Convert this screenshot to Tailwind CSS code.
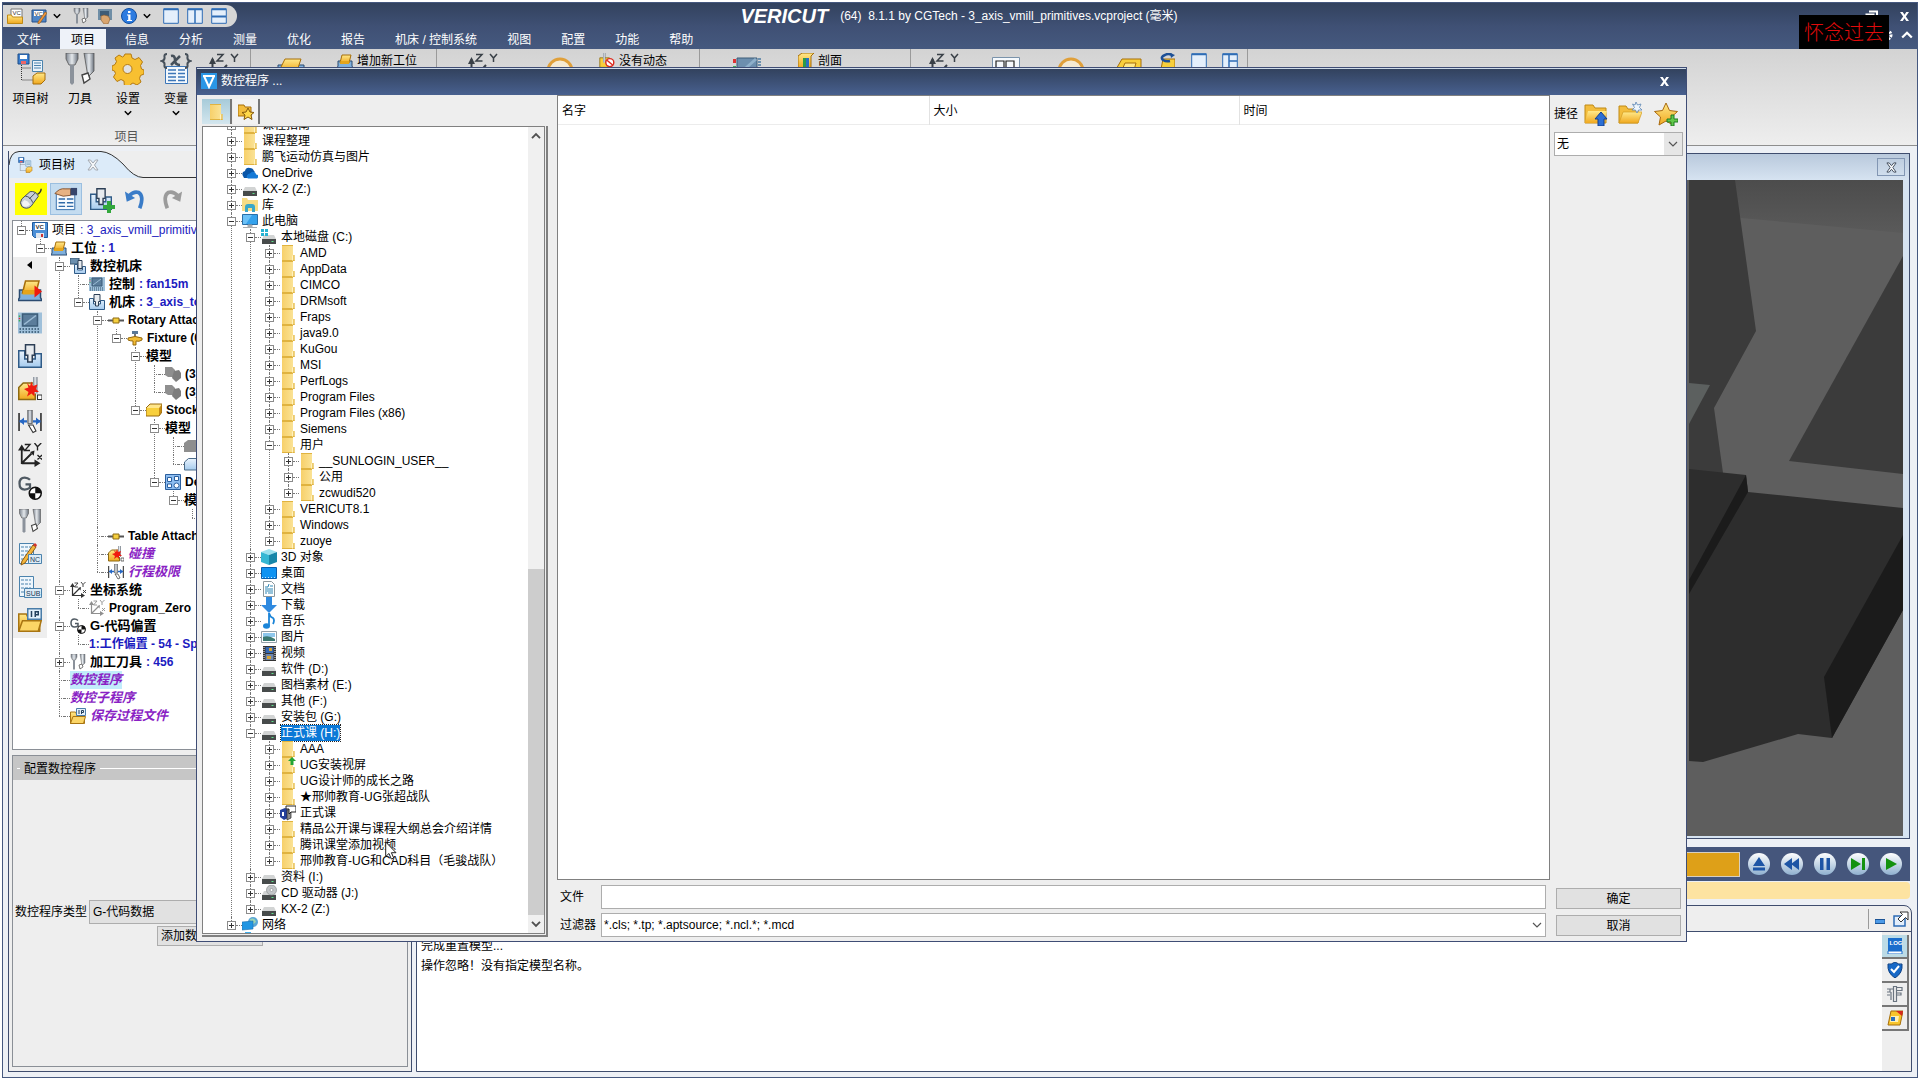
<!DOCTYPE html>
<html lang="zh-CN">
<head>
    <meta charset="UTF-8">
    <meta name="viewport" content="width=device-width, initial-scale=1.0">
    <title>VERICUT</title>
    <script src="https://cdn.jsdelivr.net/npm/@tailwindcss/browser@4"></script>
</head>
<body class="h-screen overflow-hidden bg-white p-[2px] font-['Liberation_Sans','Noto_Sans_CJK_SC',sans-serif] text-xs text-black">

    <!-- Icon library (kept rendered at zero size so its gradients stay usable) -->
    <svg class="absolute size-0" aria-hidden="true">
        <defs>
            <linearGradient id="gFolder" x1="0" y1="0" x2="1" y2="0"><stop offset="0" stop-color="#f7d06a"/><stop offset="1" stop-color="#fbe59b"/></linearGradient>
            <linearGradient id="gGold" x1="0" y1="0" x2="0" y2="1"><stop offset="0" stop-color="#ffe98a"/><stop offset="1" stop-color="#f0a81e"/></linearGradient>
            <linearGradient id="gSteel" x1="0" y1="0" x2="1" y2="0"><stop offset="0" stop-color="#7d8590"/><stop offset=".5" stop-color="#e4e8ec"/><stop offset="1" stop-color="#6b737e"/></linearGradient>
            <linearGradient id="gBlue" x1="0" y1="0" x2="0" y2="1"><stop offset="0" stop-color="#eaf4fd"/><stop offset="1" stop-color="#a5cbee"/></linearGradient>
            <linearGradient id="gBall" x1="0" y1="0" x2="0" y2="1"><stop offset="0" stop-color="#ffffff"/><stop offset="1" stop-color="#8fb0cf"/></linearGradient>
            <linearGradient id="gSky" x1="0" y1="0" x2="0" y2="1"><stop offset="0" stop-color="#4c4c4c"/><stop offset="1" stop-color="#5a5a5a"/></linearGradient>
        </defs>
        <!-- file tree icons -->
        <symbol id="folder" viewBox="0 0 16 16"><path d="M2 0h11v10h1.500v6H2z" fill="url(#gFolder)"/><path d="M2 .5h11M2 15.500h12.500M14 10v6" stroke="#e0b340" fill="none"/><path d="M12.500 10.500v5" stroke="#fff2c0"/></symbol>
        <symbol id="folderUp" viewBox="0 0 16 16"><use href="#folder"/><path d="M12 0l4 4h-2.500v4h-3V4H8z" fill="#22a436"/></symbol>
        <symbol id="drive" viewBox="0 0 16 16"><path d="M3 6h10l2 4H1z" fill="#d2d4d4"/><path d="M1 10h14v5H1z" fill="#474b4b"/><path d="M10.500 12h2v1h-2z" fill="#5fe08a"/></symbol>
        <symbol id="driveC" viewBox="0 0 16 16"><use href="#drive"/><path d="M0 0h3v3H0zM4 0h3v3H4zM0 4h3v3H0zM4 4h3v3H4z" fill="#27b3d3"/></symbol>
        <symbol id="driveCd" viewBox="0 0 16 16"><use href="#drive"/><circle cx="10.500" cy="5" r="5" fill="#c3c6c8" stroke="#8d9092" stroke-width=".7"/><circle cx="10.500" cy="5" r="1.500" fill="#fff" stroke="#8d9092" stroke-width=".7"/></symbol>
        <symbol id="cloud" viewBox="0 0 16 16"><path d="M1 11q-2-4 2-5 1-4 5-3 3 0 4 3l1 1-8 6H2z" fill="#0a56a8"/><path d="M6 13.500q-2-1-1-3t3-2q2-3 5-1 1 1 1 2 3 0 2 3l-1 1z" fill="#1479d6"/></symbol>
        <symbol id="library" viewBox="0 0 16 16"><path d="M0 1h5l1 2h10v11H0z" fill="#f7dc85"/><path d="M3 15V10q0-3 3-3h4q3 0 3 3v5h-3v-4H6v4z" fill="#3aa7c9"/></symbol>
        <symbol id="pc" viewBox="0 0 16 16"><path d="M.5 1.500h15v10H.5z" fill="#35a2ec" stroke="#2a6fa8"/><path d="M1 2h9L4 11H1z" fill="#6cc1f7"/><path d="M6 12h4v2H6zM1 14.500h14" stroke="#a9adb0" fill="#a9adb0"/></symbol>
        <symbol id="cube" viewBox="0 0 16 16"><path d="M8 0l8 3-8 3-8-3z" fill="#9be1ee"/><path d="M0 3l8 3v10l-8-3z" fill="#35b7d3"/><path d="M16 3L8 6v10l8-3z" fill="#1787a9"/></symbol>
        <symbol id="desktop" viewBox="0 0 16 16"><path d="M.5 2.500h15v11H.5z" fill="#0f93f2" stroke="#0a5fae"/><path d="M1 12.500h14" stroke="#bfe3ff" stroke-dasharray="1 2"/></symbol>
        <symbol id="doc" viewBox="0 0 16 16"><path d="M2.500.5h8l3 3v12h-11z" fill="#fff" stroke="#8c979c"/><path d="M4 6h3l1-3M9 5h3M4 8h8M4 10h8M7 12h5M4 12h2" stroke="#2c86b4" fill="none"/></symbol>
        <symbol id="down" viewBox="0 0 16 16"><path d="M5 0h6v8h5l-8 8-8-8h5z" fill="#2f8ae0"/></symbol>
        <symbol id="note" viewBox="0 0 16 16"><ellipse cx="5.500" cy="13" rx="3.500" ry="2.800" fill="#1c85d8"/><path d="M8 13V0q1 4 4 5 2 2 0 6" stroke="#1c85d8" stroke-width="1.800" fill="none"/></symbol>
        <symbol id="pic" viewBox="0 0 16 16"><path d="M.5 2.500h15v11H.5z" fill="#fff" stroke="#93a0a8"/><path d="M2 4h12v4H2z" fill="#8dc7ec"/><path d="M2 8q6-2 12 2v2H2z" fill="#3c7a72"/></symbol>
        <symbol id="film" viewBox="0 0 16 16"><path d="M2 1h13v15H2z" fill="#333"/><path d="M4.500 2h8v6h-8z" fill="#3567b0"/><path d="M4.500 9h8v6h-8z" fill="#6e86ad"/><path d="M8 3h3v3H8zM6 11h4v3H6z" fill="#d6a331"/><path d="M3 2v14M14 2v14" stroke="#fff" stroke-dasharray="1 1"/></symbol>
        <symbol id="net" viewBox="0 0 16 16"><circle cx="11" cy="5" r="5" fill="#5aa7d6"/><path d="M8 2q5-2 6 3-3 2-4 4z" fill="#9bd3b4"/><path d="M0 5l11-1v8l-11 1z" fill="#2196e3" stroke="#1b6fae" stroke-width=".6"/><path d="M3 15.500h6" stroke="#42aeea"/></symbol>
        <symbol id="course" viewBox="0 0 16 16"><path d="M0 5l5-2 3 2v8l-4 2-4-3z" fill="#24409c"/><path d="M7 5l4-1v9l-4 2z" fill="#8c8c8c" stroke="#222" stroke-width=".7"/><path d="M6 1h10v6h-5l-2 2V4H6z" fill="#fff" stroke="#222"/><path d="M2 7h2v4H2z" fill="#fff"/></symbol>
        <!-- project tree icons -->
        <symbol id="save" viewBox="0 0 16 16"><path d="M.5.5h15v15h-13l-2-2z" fill="#4c8fd6" stroke="#1f5a9c"/><path d="M3 1h10v7H3z" fill="#fff"/><path d="M4 11h8v5H4z" fill="#dfe6ee"/><path d="M9 12h2v3H9z" fill="#c33"/><text x="3.500" y="6.500" font-size="6" font-weight="bold" fill="#333">VC</text></symbol>
        <symbol id="setup" viewBox="0 0 16 16"><path d="M1 13V8h14v5l1 2H0z" fill="#7fb0dd" stroke="#2b4b70"/><path d="M3 10l2-8h9l-2 8z" fill="url(#gGold)" stroke="#a66e0a"/><path d="M3.500 8h9l-.5 3h-9z" fill="#e5a51b"/></symbol>
        <symbol id="setupRun" viewBox="0 0 16 16"><use href="#setup"/><path d="M11 5l5 4-5 4z" fill="#ef1b10"/></symbol>
        <symbol id="machine" viewBox="0 0 16 16"><path d="M.5 4.500h4V10h7V6.500h4v9H.5z" fill="url(#gBlue)" stroke="#2f5b87"/><path d="M5 .5h6v7H9.500V12h-3V7.500H5z" fill="#e7ebef" stroke="#2c3e55"/></symbol>
        <symbol id="machine2" viewBox="0 0 16 16"><path d="M0 0h9v6H0z" fill="#6b8fae" stroke="#3a556f"/><path d="M4.500 6.500h3V12h5V8.500h3v7h-11z" fill="url(#gBlue)" stroke="#2f5b87"/><path d="M8 2.500h4v8H8z" fill="#e7ebef" stroke="#2c3e55"/></symbol>
        <symbol id="control" viewBox="0 0 16 16"><path d="M0 1h16v14H0z" fill="#9fc0da"/><path d="M3 2h10v8H3z" fill="#5b7d9b" stroke="#3d5d79"/><path d="M4 9l8-6" stroke="#9dbdd6"/><path d="M1 12h14M1 14h14" stroke="#31506b" stroke-dasharray="1 1"/><path d="M1 3v1M1 6v1" stroke="#3cae57"/><path d="M1 4.500v1" stroke="#d33"/></symbol>
        <symbol id="monitor" viewBox="0 0 28 28"><path d="M4 1h20v18H4z" fill="#6d8fae" stroke="#3d5d79"/><path d="M5 18L23 2" stroke="#8fb0ca" stroke-width="3"/><path d="M0 2h3v4H0z" fill="#d33"/><path d="M0 9h3v4H0z" fill="#3cae57"/><path d="M25 2h3M25 5h3M25 8h3" stroke="#4b7ba3" stroke-width="1.500"/></symbol>
        <symbol id="attach" viewBox="0 0 16 16"><path d="M0 8.500h16" stroke="#555" stroke-width="2"/><path d="M5 6h6v5H5z" fill="#f5cf3f" stroke="#8d6a12"/></symbol>
        <symbol id="fixture" viewBox="0 0 16 16"><path d="M5 1h6v3H5z" fill="#5a7896"/><path d="M7 4h2v3H7z" fill="#777"/><path d="M1 8q7-3 14 0v2q-3 2-6 1v4H6v-4q-3 0-5-1z" fill="#f3bd36" stroke="#95690f"/></symbol>
        <symbol id="model" viewBox="0 0 16 16"><path d="M0 1h7l3 3v7H3l-3-2z" fill="#8f8f8f"/><path d="M9 5l5-1 2 3v5l-5 4-4-4z" fill="#7d7d7d"/></symbol>
        <symbol id="stock" viewBox="0 0 16 16"><path d="M0 6l4-4h12l-3 4z" fill="#ffe68a"/><path d="M0 6h13v8H0z" fill="#f8cf3c"/><path d="M13 6l3-4v8l-3 4z" fill="#c78b12"/><path d="M0 6l4-4h12v8l-3 4H0z" fill="none" stroke="#9a6b0e"/></symbol>
        <symbol id="grayBox" viewBox="0 0 16 16"><path d="M0 5l4-3h12v12H0z" fill="#8e8e8e"/></symbol>
        <symbol id="blueBox" viewBox="0 0 16 16"><path d="M.5 6l4-3.500H17V14H.5z" fill="url(#gBlue)" stroke="#4a6a88"/></symbol>
        <symbol id="design" viewBox="0 0 16 16"><path d="M.5.500h15v15H.5z" fill="#8dbdf0" stroke="#2b5f9e"/><path d="M2.500 3.500h4v4h-4zM9.500 2.500h4v4h-4zM2.500 10h4v3.500h-4z" fill="#fff" stroke="#2b5f9e"/><circle cx="11.500" cy="11.500" r="2.500" fill="#fff" stroke="#2b5f9e"/></symbol>
        <symbol id="collide" viewBox="0 0 16 16"><path d="M.5 7l3-3h8v11H.5z" fill="url(#gGold)" stroke="#8d6a12"/><path d="M10 0h3v11h-3z" fill="url(#gSteel)"/><path d="M13 12h3v3h-3z" fill="#fff" stroke="#333" stroke-width=".7"/><path d="M9 3l1 3 3-1-1 3 2 2-3 0 0 3-2-2-3 2 1-3-3-2 3-1-1-3 2 2z" fill="#ef1b10"/></symbol>
        <symbol id="travel" viewBox="0 0 16 16"><path d="M.7 2v12M15.300 2v12" stroke="#222"/><path d="M1 7.500h5M10 7.500h5" stroke="#2667c4" stroke-width="1.500"/><path d="M1 7.500l3-2.500v5zM15 7.500l-3-2.500v5z" fill="#2667c4"/><path d="M6.500 0h3v9h-3z" fill="url(#gSteel)" stroke="#555" stroke-width=".5"/><path d="M7 10l3 0 2 4-2 1z" fill="#fff" stroke="#333" stroke-width=".7"/></symbol>
        <symbol id="csys" viewBox="0 0 16 16"><path d="M2.500 14V4M2.500 13.500H12M2.500 13.500L9 7" stroke="currentColor" stroke-width="1.200" fill="none"/><path d="M2.500 1L5 5H0zM15 13.500l-4 2.500v-5zM11 5l-.5 3.500L8 6z" fill="currentColor"/><path d="M4.500 1h3.500l-3.500 4H8M11 0l2 2.500L15.500 0M13 2.500V5M13 8l3 3M16 8l-3 3" stroke="currentColor" stroke-width=".9" fill="none"/></symbol>
        <symbol id="csysGray" viewBox="0 0 16 16"><g color="#8f8f8f"><use href="#csys"/></g></symbol>
        <symbol id="gcode" viewBox="0 0 16 16"><path d="M8 2.500Q6.500 1 4.500 1 1 1 1 5t3.500 4q2 0 3.500-1.200V5.500H5" stroke="#4f5962" stroke-width="1.500" fill="none"/><circle cx="11.500" cy="11.500" r="4" fill="#fff" stroke="#111"/><path d="M11.500 11.500v-4a4 4 0 0 1 4 4zM11.500 11.500v4a4 4 0 0 1-4-4z" fill="#111"/></symbol>
        <symbol id="tools" viewBox="0 0 16 16"><path d="M1 0h6v3L5.500 6h-3L1 3z" fill="url(#gSteel)" stroke="#555" stroke-width=".4"/><path d="M3 6h2v9l-1 1-1-1z" fill="#8b929b"/><path d="M10 0h5v9l-3 3z" fill="url(#gSteel)" stroke="#555" stroke-width=".4"/><path d="M9 11l3-1 1 3-3 2z" fill="#fff" stroke="#444" stroke-width=".7"/></symbol>
        <symbol id="ip" viewBox="0 0 16 16"><path d="M.5 4h5l1 2h8v9.500H.5z" fill="url(#gGold)" stroke="#a87512"/><path d="M6.500.5h9v7h-9z" fill="#e4f1fb" stroke="#4a7da8"/><path d="M9 2v4M11.500 6V2.500h2v2h-2" stroke="#23405c" fill="none"/><path d="M3 8.500h12.500l-2 7H.5z" fill="#fbd566" stroke="#a87512"/></symbol>
        <symbol id="nc" viewBox="0 0 24 24"><path d="M1.500 1.500h14v20h-14z" fill="#eef6fc" stroke="#4b83ad"/><path d="M3 5h10M3 9h10M3 13h10M3 17h6" stroke="#4b83ad" stroke-dasharray="3 1"/><path d="M15 3l3 2-11 16-4 2 1-4z" fill="#f4b63b" stroke="#8a5a12"/><path d="M15 3l3 2 1-2-2-2z" fill="#d0322a"/><path d="M10.500 12.500h13v9h-13z" fill="#dcebf6" stroke="#4b83ad"/><text x="12" y="20" font-size="7" fill="#1d3954">NC</text></symbol>
        <symbol id="sub" viewBox="0 0 24 24"><path d="M1.500 1.500h14v20h-14z" fill="#eef6fc" stroke="#4b83ad"/><path d="M3 5h10M3 9h10M3 13h10M3 17h6" stroke="#4b83ad" stroke-dasharray="3 1"/><path d="M6.500 13.500h17v9h-17z" fill="#dcebf6" stroke="#4b83ad"/><text x="8" y="21" font-size="7" fill="#1d3954">SUB</text></symbol>
        <!-- toolbar icons -->
        <symbol id="openVc" viewBox="0 0 16 16"><path d="M4 1h11v9H4z" fill="#fff" stroke="#777"/><text x="5.500" y="7" font-size="6" fill="#333">VC</text><path d="M.5 7h4l1 2h10v6.500H.5z" fill="url(#gGold)" stroke="#c08a16"/></symbol>
        <symbol id="saveVc" viewBox="0 0 16 16"><path d="M1 2h14v12H1z" fill="#4f86c7" stroke="#27518a"/><path d="M3 3h9v5H3z" fill="#fff"/><text x="3.500" y="7.500" font-size="6" fill="#333">VC</text><path d="M14 4l2 1-7 10-2 1v-2z" fill="#f4953b" stroke="#8a5a12" stroke-width=".6"/></symbol>
        <symbol id="hand" viewBox="0 0 16 16"><path d="M1 1h14v11H1z" fill="#6f8ea6"/><path d="M3 3h9v5H3z" fill="#3d5b76"/><path d="M4 8l3-1 4 1 2 3-2 5H7l-3-4z" fill="#d9a56f" stroke="#85592c" stroke-width=".6"/></symbol>
        <symbol id="info" viewBox="0 0 16 16"><circle cx="8" cy="8" r="7.500" fill="#2c7be0" stroke="#0f4d9e"/><path d="M7 3h2.500v2H7zM6 6.500h3.500V12H11v1H6v-1h1.200V7.500H6z" fill="#fff"/></symbol>
        <symbol id="win1" viewBox="0 0 16 16"><path d="M.7.700h14.600v14.600H.7z" fill="#e4effb" stroke="#2e6cb5"/><path d="M1 1.500h14" stroke="#2e6cb5" stroke-width="1.500"/></symbol>
        <symbol id="win2" viewBox="0 0 16 16"><use href="#win1"/><path d="M8 1v14" stroke="#2e6cb5" stroke-width="1.500"/></symbol>
        <symbol id="win3" viewBox="0 0 16 16"><use href="#win1"/><path d="M1 8.500h14" stroke="#2e6cb5" stroke-width="2"/></symbol>
        <symbol id="win4" viewBox="0 0 16 16"><use href="#win1"/><path d="M7 1v14M7 8h8" stroke="#2e6cb5" stroke-width="1.500"/></symbol>
        <symbol id="chev" viewBox="0 0 8 8"><path d="M.8 2.300L4 5.500l3.200-3.200" stroke="currentColor" stroke-width="1.500" fill="none"/></symbol>
        <symbol id="chevThin" viewBox="0 0 10 10"><path d="M1 3l4 4 4-4" stroke="currentColor" stroke-width="1.200" fill="none"/></symbol>
        <symbol id="close" viewBox="0 0 10 10"><path d="M0 0h3l2 3 2-3h3L6.500 5 10 10H7L5 7l-2 3H0l3.500-5z" fill="currentColor"/></symbol>
        <symbol id="closeHollow" viewBox="0 0 12 12"><path d="M1 1h2.500L6 4l2.500-3H11L7.500 6 11 11H8.500L6 8l-2.500 3H1l3.500-5z" fill="#f4f6f8" stroke="currentColor"/></symbol>
        <symbol id="projTree" viewBox="0 0 32 32"><path d="M3 1h11v10H3z" fill="#3a7fd0" stroke="#1c4d87"/><path d="M5 2h7v4H5z" fill="#fff"/><path d="M6 8h5v3H6z" fill="#e66"/><path d="M6.500 12v15h12M6.500 15h10" stroke="#333" stroke-dasharray="1 1" fill="none"/><path d="M17.500 7.500h10v11h-10z" fill="#eaf3fb" stroke="#4b83ad"/><path d="M19 10h7M19 12.500h7M19 15h7" stroke="#4b83ad"/><path d="M18 23l4-3h8v7l-4 4h-8z" fill="url(#gGold)" stroke="#a66e0a"/></symbol>
        <symbol id="gear" viewBox="0 0 32 32"><path d="M13 1h6l1 4 3 1.500 4-2 3.500 4.500-2 3.500 1 3.500 2.500 1v4l-3.500 1.500-1 3 1.500 3.500-4 3-4-2-2 1-1.500 3.500h-5L12 28l-3-1.500-4 2L1.500 24l2-3.500L2.500 18 0 17v-4l3-1.500 1.500-3L3 5l4-3 3.500 2L12 3z" fill="#f8c031" stroke="#b57a10"/><circle cx="15.500" cy="16" r="4.500" fill="#e2e2e2" stroke="#b57a10"/></symbol>
        <symbol id="varX" viewBox="0 0 32 32"><path d="M5.500 13.500h22v17h-22z" fill="#f3f8fd" stroke="#3c76b8"/><path d="M8 17h8M18 17h7M8 20.500h8M18 20.500h7M8 24h8M18 24h7M8 27.500h8M18 27.500h7" stroke="#3c76b8" stroke-width="1.500"/><path d="M7 1Q4 1 4.500 4T2 8q3 1 2.500 4T7 15M25 1q3 0 2.500 3T30 8q-3 1-2.500 4T25 15" fill="none" stroke="#46505a" stroke-width="2"/><path d="M11 3q4-1 4 4t5 5M20 3l-9 9" fill="none" stroke="#46505a" stroke-width="2.500"/></symbol>
        <symbol id="axisZY" viewBox="0 0 32 32"><path d="M4.500 31V6" stroke="#3a4148" stroke-width="2"/><path d="M4.500 4l3.500 7H1z" fill="#3a4148"/><path d="M9 1.500h6L9 8h6.500M23 1l3.500 4L30 1M26.500 5v4" stroke="#3a4148" stroke-width="1.500" fill="none"/><path d="M6 26L19 12" stroke="#3a4148" stroke-width="2"/></symbol>
        <symbol id="bigBox" viewBox="0 0 28 28"><path d="M1 26V8h26v18z" fill="#7fb0dd" stroke="#2b4b70"/><path d="M2 14l6-12h16l-4 12z" fill="url(#gGold)" stroke="#a66e0a"/></symbol>
        <symbol id="hollowBox" viewBox="0 0 28 28"><path d="M1 14L8 2h19v12l-5 6H1z" fill="#f8cf3c" stroke="#a66e0a"/><path d="M8 13l3-7h11l-2 7z" fill="#ffe98a" stroke="#a66e0a"/></symbol>
        <symbol id="ring" viewBox="0 0 28 28"><circle cx="14" cy="14" r="12" fill="#f5ead2" stroke="#e0a03a" stroke-width="3"/></symbol>
        <symbol id="nodyn" viewBox="0 0 20 20"><path d="M1 6h12v12H1z" fill="#f8cf3c" stroke="#8d6a12"/><path d="M5 0h3v12H5z" fill="url(#gSteel)"/><circle cx="13.500" cy="12" r="5" fill="#fff" stroke="#dc2a1e" stroke-width="1.800"/><path d="M10 9l7 6" stroke="#dc2a1e" stroke-width="1.800"/></symbol>
        <symbol id="sectionIc" viewBox="0 0 16 16"><path d="M0 3l4-3h12l-3 3v12H0z" fill="url(#gGold)" stroke="#a66e0a"/><path d="M5 5h3v10H5z" fill="#2c9c48"/><path d="M8 5h3v10H8z" fill="#2a6fc0"/></symbol>
        <symbol id="frames" viewBox="0 0 28 24"><path d="M.5.500h27v23H.5z" fill="#f5f9fd" stroke="#7a93ab"/><path d="M4 4h8v16H4zM14 4h8v16h-8z" fill="none" stroke="#222" stroke-width="1.200"/></symbol>
        <symbol id="sIcon" viewBox="0 0 16 16"><path d="M4 6h12v10H2z" fill="#f8cf3c" stroke="#a66e0a"/><path d="M13 2Q9 0 6 2 1 4 4 7q3 2 7 1" stroke="#1c4f96" stroke-width="2.500" fill="none"/><path d="M11 0l5 2-4 3z" fill="#1c4f96"/></symbol>
        <symbol id="mouse" viewBox="0 0 26 26"><path d="M20 8q4-2 4-6" stroke="#333" stroke-width="1.500" fill="none"/><path d="M3 13L12 5q6-1 9 5l-8 11q-5 4-10 0-3-4 0-8z" fill="#c9d0d6" stroke="#3d464f"/><path d="M7 10q5 0 8 7M11 13l7-7" stroke="#3d464f" fill="none"/><path d="M6 14q4 1 6 5-4 4-8 1-2-3 2-6z" fill="#f2f4f6"/></symbol>
        <symbol id="handList" viewBox="0 0 26 26"><path d="M2.500 6.500h20v18h-20z" fill="#f6fafe" stroke="#2f6aa8"/><path d="M5 13h7M14 13h7M5 17h7M14 17h7M5 21h7M14 21h7" stroke="#2f6aa8" stroke-width="1.500"/><path d="M1 7q5-6 11-5h6v7l-8 1z" fill="#e7b283" stroke="#83502a"/><path d="M18 1h7v8h-7z" fill="#36456b"/></symbol>
        <symbol id="undo" viewBox="0 0 26 26"><path d="M6 9q5-5 10-3 6 4 1 17" stroke="currentColor" stroke-width="4" fill="none"/><path d="M1 5l2 11 9-4z" fill="currentColor"/></symbol>
        <symbol id="upFolder" viewBox="0 0 24 24"><path d="M1 3h8l2 3h11v15H1z" fill="#f3bd3d" stroke="#c08a16"/><path d="M4 9h19l-3 12H1z" fill="url(#gGold)"/><path d="M17 10l6 7h-3v7h-6v-7h-3z" fill="#2d6fd4" stroke="#123f8c"/></symbol>
        <symbol id="newFolder" viewBox="0 0 24 24"><path d="M1 4h7l2 3h10v14H1z" fill="#f3bd3d" stroke="#c08a16"/><path d="M5 10h19l-4 11H1z" fill="url(#gGold)" stroke="#d39b20" stroke-width=".7"/><path d="M18 0l1.500 3L23 2l-1.500 3.500L24 8l-3.500 0L19 11l-1.500-3L14 8l2.500-2.500L14.500 2 17 3z" fill="#eef5fc" stroke="#5d87b5" stroke-width=".8"/></symbol>
        <symbol id="starAdd" viewBox="0 0 24 24"><path d="M12 1l3.500 7.500 8 1-6 5.500 1.500 8L12 19l-7 4 1.500-8-6-5.500 8-1z" fill="url(#gGold)" stroke="#a8690f"/><path d="M17 13h3v4h4v3h-4v4h-3v-4h-4v-3h4z" fill="#62c84a" stroke="#1d7a20"/></symbol>
        <symbol id="favFolder" viewBox="0 0 16 16"><path d="M0 1h6l1 2h6v9H0z" fill="#f3bd3d" stroke="#a66e0a"/><path d="M10 4l2 4 4 .5-3 2.500 1 4.500-4-2.500L6 15.500 7 11 4 8.500 8 8z" fill="#ffd84a" stroke="#85590c"/></symbol>
        <symbol id="shield" viewBox="0 0 16 16"><path d="M8 0q4 3 7 2 1 9-7 14Q0 11 1 2q3 1 7-2z" fill="#1668c7" stroke="#0b3f82"/><path d="M4 7l3 3 5-6" stroke="#fff" stroke-width="2" fill="none"/></symbol>
        <symbol id="logBook" viewBox="0 0 16 16"><path d="M1 0h14v13H1z" fill="#1a6dcc"/><path d="M1 13h14v3H1z" fill="#fff" stroke="#1a6dcc"/><text x="2.500" y="7" font-size="6" font-weight="bold" fill="#fff">LOG</text></symbol>
        <symbol id="caliper" viewBox="0 0 16 16"><path d="M6.500.5h3v15h-3zM0 3h6M3 3v3H0M3 9H0M4 6v8M10 1.500h5v3h-5M10 7h4v2h-4" fill="none" stroke="#6a7480" stroke-width="1.200"/></symbol>
        <symbol id="boxRed" viewBox="0 0 16 16"><path d="M4 1h12l-3 14H1z" fill="#f8c52c" stroke="#a66e0a"/><path d="M4 6h8l-1 6H3z" fill="#fff1b5"/><path d="M9 1h7l-1 5z" fill="#d3281f"/><path d="M4 7h4v4H4z" fill="#2a6fc0"/></symbol>
    </svg>

    <div class="flex h-full flex-col border border-[#45587f] bg-[#eeeeee]">

        <!-- Title bar and menu -->
        <header class="shrink-0 bg-linear-to-b from-[#32425e] via-[#3f5074] to-[#45597f] text-white">
            <div class="flex h-[26px] items-center">
                <div class="flex h-[22px] w-[234px] shrink-0 items-center rounded-r-full bg-[#d6d6d6] pl-1 text-black">
                    <svg class="size-4"><use href="#openVc"/></svg>
                    <svg class="ml-2 size-4"><use href="#saveVc"/></svg>
                    <svg class="ml-1.5 size-2"><use href="#chev"/></svg>
                    <svg class="ml-3 size-4"><use href="#tools"/></svg>
                    <svg class="ml-2 size-4"><use href="#hand"/></svg>
                    <svg class="ml-2 size-4"><use href="#info"/></svg>
                    <svg class="ml-1.5 size-2"><use href="#chev"/></svg>
                    <svg class="ml-3 size-4"><use href="#win1"/></svg>
                    <svg class="ml-2 size-4"><use href="#win2"/></svg>
                    <svg class="ml-2 size-4"><use href="#win3"/></svg>
                </div>
                <h1 class="flex flex-1 items-center justify-center gap-3 whitespace-pre pr-[184px]">
                    <span class="text-xl leading-6 font-bold italic">VERICUT</span>
                    <span>(64)  8.1.1 by CGTech - 3_axis_vmill_primitives.vcproject (毫米)</span>
                </h1>
                <button class="mr-[18px]" aria-label="还原"><svg class="size-[13px]" viewBox="0 0 13 13"><path d="M4 1.500h8v7M1.500 4.500h7v7h-7z" stroke="#fff" stroke-width="2" fill="none"/></svg></button>
                <button class="mr-1 p-1" aria-label="关闭"><svg class="size-[9px]"><use href="#close"/></svg></button>
            </div>
            <nav class="flex h-5 items-end gap-2 whitespace-nowrap pl-[3px] leading-[18px]">
                <a href="#" class="px-[11px]">文件</a>
                <a href="#" class="bg-[#eef2f9] px-[11px] pt-0.5 text-black">项目</a>
                <a href="#" class="px-[11px]">信息</a>
                <a href="#" class="px-[11px]">分析</a>
                <a href="#" class="px-[11px]">测量</a>
                <a href="#" class="px-[11px]">优化</a>
                <a href="#" class="px-[11px]">报告</a>
                <a href="#" class="px-[11px]">机床 / 控制系统</a>
                <a href="#" class="px-[11px]">视图</a>
                <a href="#" class="px-[11px]">配置</a>
                <a href="#" class="px-[11px]">功能</a>
                <a href="#" class="px-[11px]">帮助</a>
                <svg class="mb-2 ml-auto size-3" viewBox="0 0 12 12"><circle cx="6" cy="6" r="4" stroke="#fff" stroke-width="3" stroke-dasharray="2 1" fill="none"/></svg>
                <svg class="mb-2 mr-1 size-3 rotate-180"><use href="#chev"/></svg>
            </nav>
        </header>

        <!-- Ribbon -->
        <section class="flex h-[97px] shrink-0 border-b border-[#8e8e8e] bg-linear-to-b from-[#d3d3d3] to-[#eeeeee]">
            <div class="flex flex-col border-r border-[#9a9a9a]">
                <div class="flex h-[81px] pt-1">
                    <button class="flex w-[55px] flex-col items-center gap-1.5"><svg class="size-8"><use href="#projTree"/></svg>项目树</button>
                    <button class="flex w-11 flex-col items-center gap-1.5"><svg class="size-8"><use href="#tools"/></svg>刀具</button>
                    <button class="flex w-[52px] flex-col items-center gap-1.5"><svg class="size-8"><use href="#gear"/></svg>设置<svg class="-mt-1 size-2"><use href="#chev"/></svg></button>
                    <button class="flex w-11 flex-col items-center gap-1.5"><svg class="size-8"><use href="#varX"/></svg>变量<svg class="-mt-1 size-2"><use href="#chev"/></svg></button>
                    <button class="flex w-[52px] flex-col items-center"><svg class="size-8"><use href="#axisZY"/></svg></button>
                </div>
                <p class="text-center leading-[14px] text-[#555]">项目</p>
            </div>
            <div class="flex items-start border-r border-[#9a9a9a] pt-1">
                <button class="flex w-20 justify-center pt-1"><svg class="size-7"><use href="#bigBox"/></svg></button>
                <button class="flex w-[105px] items-center gap-1 pl-1.5"><svg class="size-4"><use href="#setup"/></svg>增加新工位</button>
            </div>
            <div class="flex items-start border-r border-[#9a9a9a] pt-1">
                <button class="flex w-[92px] justify-center"><svg class="size-8"><use href="#axisZY"/></svg></button>
                <button class="flex w-[62px] justify-center pt-1"><svg class="size-7"><use href="#ring"/></svg></button>
                <button class="flex w-[108px] items-center gap-1 pl-2"><svg class="size-4"><use href="#nodyn"/></svg>没有动态</button>
            </div>
            <div class="flex items-start border-r border-[#9a9a9a] pt-1">
                <button class="flex w-[94px] justify-center pt-1"><svg class="size-7"><use href="#monitor"/></svg></button>
                <button class="flex w-[116px] items-center gap-1 pl-1"><svg class="size-4"><use href="#sectionIc"/></svg>剖面</button>
            </div>
            <div class="flex items-start border-r border-[#9a9a9a] pt-1">
                <button class="flex w-[66px] justify-center"><svg class="size-8"><use href="#axisZY"/></svg></button>
                <button class="flex w-[58px] justify-center pt-1"><svg class="h-6 w-7"><use href="#frames"/></svg></button>
                <button class="flex w-[72px] justify-center pt-1"><svg class="size-7"><use href="#ring"/></svg></button>
                <button class="flex w-[42px] justify-center pt-1"><svg class="size-7"><use href="#hollowBox"/></svg></button>
                <button class="flex w-9 justify-center"><svg class="size-4"><use href="#sIcon"/></svg></button>
                <button class="flex w-7 justify-center"><svg class="size-4"><use href="#win1"/></svg></button>
                <button class="flex w-[34px] justify-center"><svg class="size-4"><use href="#win4"/></svg></button>
            </div>
        </section>

        <main class="flex min-h-0 flex-1 gap-1 bg-[#edf0f5] p-[5px]">

            <!-- Project tree panel -->
            <aside class="relative flex w-[404px] shrink-0 flex-col border-x border-b border-[#3f4d6e] bg-[#eeeeee]">
                <div class="flex h-[27px]">
                    <div class="relative flex w-[134px] items-center gap-1.5 pl-2">
                        <svg class="absolute inset-0 h-full w-full" viewBox="0 0 134 27"><path d="M0 27V11Q1 1 10 .5H92Q102 1 114 13 125 26 134 26.500V27z" fill="#dcebf9"/><path d="M0 14Q1 1 10 .5H92Q102 1 114 13 125 26.500 134 26.500" fill="none" stroke="#333"/></svg>
                        <svg class="relative size-4"><use href="#projTree"/></svg>
                        <span class="relative">项目树</span>
                        <svg class="relative ml-1.5 size-3 text-[#a3a9b1]"><use href="#closeHollow"/></svg>
                    </div>
                    <div class="flex-1 border-b border-[#333]"></div>
                </div>
                <div class="flex h-[42px] items-center gap-[3px] pl-1.5">
                    <button class="grid size-8 place-items-center bg-[#ffff00]" aria-label="选择"><svg class="size-6"><use href="#mouse"/></svg></button>
                    <button class="grid size-8 place-items-center border border-[#9bbfe0] bg-[#c4dcf0]" aria-label="配置"><svg class="size-6"><use href="#handList"/></svg></button>
                    <button class="relative grid size-8 place-items-center" aria-label="添加"><svg class="size-[22px]"><use href="#machine"/></svg><svg class="absolute right-0.5 bottom-0.5 size-3" viewBox="0 0 12 12"><path d="M4 0h4v4h4v4H8v4H4V8H0V4h4z" fill="#32a83c"/></svg></button>
                    <button class="grid size-8 place-items-center text-[#3a7cc8]" aria-label="撤销"><svg class="size-6"><use href="#undo"/></svg></button>
                    <button class="grid size-8 place-items-center text-[#9b9b9b]" aria-label="重做"><svg class="size-6 -scale-x-100"><use href="#undo"/></svg></button>
                    <button class="grid size-8 place-items-center" aria-label="展开"><svg class="size-5"><use href="#win1"/></svg></button>
                </div>
                <div class="relative mb-[5px] ml-[3px] mr-[3px] min-h-0 flex-1 overflow-hidden border border-[#8a8f96] bg-white">
                    <ul id="projectTree" class="whitespace-nowrap pl-1"></ul>
                    <!-- Tool palette docked over the tree -->
                    <div class="absolute left-0 top-9 flex w-[34px] flex-col items-center gap-[9px] bg-[#eeeeee] pb-1.5 pt-1">
                        <svg class="size-2" viewBox="0 0 8 8"><path d="M6 0v8L1 4z"/></svg>
                        <svg class="size-6"><use href="#setupRun"/></svg>
                        <svg class="size-6"><use href="#control"/></svg>
                        <svg class="size-6"><use href="#machine"/></svg>
                        <svg class="size-6"><use href="#collide"/></svg>
                        <svg class="size-6"><use href="#travel"/></svg>
                        <svg class="size-6 text-[#222]"><use href="#csys"/></svg>
                        <svg class="size-6"><use href="#gcode"/></svg>
                        <svg class="size-6"><use href="#tools"/></svg>
                        <svg class="size-6"><use href="#nc"/></svg>
                        <svg class="size-6"><use href="#sub"/></svg>
                        <svg class="size-6"><use href="#ip"/></svg>
                    </div>
                </div>
                <section class="mx-[3px] mb-1 h-[312px] shrink-0 border border-[#8a8f96]">
                    <div class="flex h-6 items-center gap-1 bg-[#c6c6c6] pl-1">
                        <span class="h-px w-[3px] bg-white"></span>
                        <h2 class="pt-0.5">配置数控程序</h2>
                        <span class="h-px flex-1 bg-white"></span>
                    </div>
                    <div class="flex items-center gap-0.5 pl-0.5 pt-[120px]">
                        <label for="ncType">数控程序类型</label>
                        <select id="ncType" class="h-6 w-[310px] appearance-none border border-[#adadad] bg-[#e1e1e1] pl-[3px]"><option>G-代码数据</option></select>
                    </div>
                    <button class="ml-36 mt-0.5 h-5 w-[106px] border border-[#adadad] bg-[#e1e1e1] pl-[3px] text-left leading-4">添加数控程序</button>
                </section>
            </aside>

            <!-- Machine view, playback and log -->
            <div class="flex min-w-0 flex-1 flex-col pt-[2px]">
                <section class="mr-0.5 flex min-h-0 flex-1 flex-col border border-[#3f4d6e] bg-[#d6e3f1]">
                    <div class="flex h-[26px] items-center justify-end bg-linear-to-b from-[#b9c9dc] to-[#d6e3f1] pr-1">
                        <button class="grid h-[18px] w-7 place-items-center border border-[#8296b3] text-[#3c4756]" aria-label="关闭视图"><svg class="size-[11px]"><use href="#closeHollow"/></svg></button>
                    </div>
                    <div class="mb-0.5 mr-1.5 flex min-h-0 flex-1 justify-end bg-[#5e5e5e]">
                        <svg class="h-full w-[214px]" viewBox="0 0 214 656" preserveAspectRatio="none">
                            <path d="M0 0H214V53L52 38z" fill="url(#gSky)"/>
                            <path d="M0 0H46L67 151 25 228 34 293H0z" fill="#3b3b3b"/>
                            <path d="M0 203L21 205 0 244z" fill="#5c605f"/>
                            <path d="M214 76L100 281 214 294z" fill="#3b3b3b"/>
                            <path d="M0 289L57 295 59 312 214 328V430L143 558 109 554 14 582 0 581z" fill="#2d2d2d"/>
                            <path d="M214 355L135 497 143 558 214 430z" fill="#1b1b1b"/>
                            <path d="M57 295L59 312 0 414V400z" fill="#1b1b1b"/>
                        </svg>
                    </div>
                </section>
                <div class="mr-0.5 mt-2 flex h-[34px] shrink-0 items-center gap-[11px] bg-[#45567c] pr-2">
                    <div class="mr-[-3px] h-[25px] flex-1 border border-[#d8d0c0] bg-[#dea018]"></div>
                    <button class="size-[22px]" aria-label="重置"><svg class="size-full" viewBox="0 0 22 22"><circle cx="11" cy="11" r="11" fill="url(#gBall)"/><path d="M11 4l6 9H5zM5 14.500h12v3H5z" fill="#1d55a5"/></svg></button>
                    <button class="size-[22px]" aria-label="后退"><svg class="size-full" viewBox="0 0 22 22"><circle cx="11" cy="11" r="11" fill="url(#gBall)"/><path d="M11 5v12l-8-6zM18 5v12l-8-6z" fill="#1d55a5"/></svg></button>
                    <button class="size-[22px]" aria-label="暂停"><svg class="size-full" viewBox="0 0 22 22"><circle cx="11" cy="11" r="11" fill="url(#gBall)"/><path d="M6 5h3.500v12H6zM12.500 5H16v12h-3.500z" fill="#1d55a5"/></svg></button>
                    <button class="size-[22px]" aria-label="单步"><svg class="size-full" viewBox="0 0 22 22"><circle cx="11" cy="11" r="11" fill="url(#gBall)"/><path d="M4 5l10 6-10 6zM15 5h3v12h-3z" fill="#14920f"/></svg></button>
                    <button class="size-[22px]" aria-label="播放"><svg class="size-full" viewBox="0 0 22 22"><circle cx="11" cy="11" r="11" fill="url(#gBall)"/><path d="M6 5l11 6-11 6z" fill="#14920f"/></svg></button>
                </div>
                <div class="mr-0.5 mt-px h-[17px] shrink-0 rounded-r bg-[#fde3a1]"></div>
                <section class="mt-1.5 flex h-[167px] shrink-0 flex-col rounded-tr-lg border border-[#3f4d6e] bg-[#eeeeee]">
                    <div class="flex h-[26px] shrink-0 items-center justify-end border-b border-[#3f4d6e] pr-0.5">
                        <span class="mr-1.5 h-5 w-px bg-[#9a9a9a]"></span>
                        <svg class="mr-2 size-2.5" viewBox="0 0 10 10"><path d="M0 5.500h10v4H0z" fill="#4d9be8" stroke="#1d5596"/></svg>
                        <svg class="size-4" viewBox="0 0 16 16"><path d="M1 5h11v10H1z" fill="#e4effb" stroke="#2e6cb5" stroke-width="1.500"/><path d="M7 1h8v8l-2.500-2.500L8 11 5 8l4.500-4.500z" fill="#fff" stroke="#333"/></svg>
                    </div>
                    <div class="flex min-h-0 flex-1">
                        <div class="flex-1 bg-white pl-1 pt-1 leading-5">
                            <p>完成重置模型...</p>
                            <p>操作忽略！没有指定模型名称。</p>
                        </div>
                        <div class="w-[29px] pt-[3px]">
                            <button class="grid h-6 w-[27px] place-items-center border-b-2 border-r-2 border-[#777] bg-[#bcdbe6]" aria-label="日志"><svg class="size-4"><use href="#logBook"/></svg></button>
                            <button class="grid h-6 w-[27px] place-items-center border-b-2 border-r-2 border-[#777]" aria-label="检查"><svg class="size-4"><use href="#shield"/></svg></button>
                            <button class="grid h-6 w-[27px] place-items-center border-b-2 border-r-2 border-[#777]" aria-label="测量"><svg class="size-4"><use href="#caliper"/></svg></button>
                            <button class="grid h-6 w-[27px] place-items-center border-b-2 border-r-2 border-[#777]" aria-label="比较"><svg class="size-4"><use href="#boxRed"/></svg></button>
                        </div>
                    </div>
                </section>
            </div>
        </main>
    </div>

    <!-- Screen owner mark -->
    <div class="absolute right-[31px] top-[15px] flex h-[34px] w-[90px] items-center justify-center bg-black font-['Noto_Sans_CJK_SC',sans-serif] text-xl font-light text-[#e00b0b]">怀念过去</div>

    <!-- NC program dialog -->
    <div role="dialog" aria-labelledby="dlgTitle" class="absolute bottom-[138px] left-[196px] right-[233px] top-[67px] flex flex-col border border-[#3f4d75] bg-[#eeeeee]">
        <div class="flex h-[27px] shrink-0 items-center gap-1 border-t border-[#cfdbe8] bg-linear-to-b from-[#32425e] to-[#48608f] pb-0.5 pl-1 pr-[17px] text-white">
            <svg class="size-4" viewBox="0 0 16 16"><path d="M0 0h16v16H0z" fill="#2a96e6"/><path d="M2 3h12M3 3l5 11 5-11" stroke="#fff" stroke-width="2" fill="none"/></svg>
            <h2 id="dlgTitle" class="flex-1">数控程序 ...</h2>
            <button aria-label="关闭"><svg class="size-[9px]"><use href="#close"/></svg></button>
        </div>
        <div class="flex min-h-0 flex-1">
            <!-- Folder tree -->
            <div class="flex w-[360px] shrink-0 flex-col pb-1 pl-[5px] pr-[9px] pt-1">
                <div class="flex h-[27px] gap-px">
                    <button class="grid h-[25px] w-[30px] place-items-center border-r-2 border-[#777] bg-linear-to-b from-[#a7cbd9] to-[#d3e6ee]" aria-label="文件夹"><svg class="size-4"><use href="#folder"/></svg></button>
                    <button class="grid h-[25px] w-[27px] place-items-center border-r-2 border-[#777] bg-[#f2f2f2]" aria-label="收藏夹"><svg class="size-4"><use href="#favFolder"/></svg></button>
                </div>
                <div class="min-h-0 flex-1 border-b-2 border-r-2 border-[#808080] pb-px pr-px">
                    <div class="flex h-full border border-[#808080] bg-white">
                        <div class="flex min-w-0 flex-1 flex-col justify-end overflow-hidden pl-6">
                            <ul id="folderTree" class="whitespace-nowrap"></ul>
                        </div>
                        <div class="flex w-4 flex-col items-center bg-[#f0f0f0] text-[#505050]">
                            <svg class="my-1 size-2.5 shrink-0 rotate-180"><use href="#chev"/></svg>
                            <div class="flex-[425]"></div>
                            <div class="w-full flex-[346] bg-[#cdcdcd]"></div>
                            <svg class="my-1 size-2.5 shrink-0"><use href="#chev"/></svg>
                        </div>
                    </div>
                </div>
            </div>
            <!-- File list -->
            <div class="flex min-w-0 flex-1 flex-col pb-1">
                <div class="min-h-0 flex-1 border border-[#808080] bg-white">
                    <table class="w-full table-fixed text-left">
                        <thead>
                            <tr class="h-7 border-b border-[#ececec]">
                                <th class="w-[371px] border-r border-[#e2e2e2] pl-1 pt-0.5 font-normal">名字</th>
                                <th class="w-[310px] border-r border-[#e2e2e2] pl-1 pt-0.5 font-normal">大小</th>
                                <th class="pl-1 pt-0.5 font-normal">时间</th>
                            </tr>
                        </thead>
                    </table>
                </div>
                <div class="mt-[5px] flex h-6 items-center pr-1">
                    <label for="fileName" class="w-11 pl-[3px]">文件</label>
                    <input id="fileName" type="text" class="h-full flex-1 border border-[#adadad] bg-white px-0.5">
                </div>
                <div class="relative mt-1 flex h-6 items-center pr-1">
                    <label for="filter" class="w-11 pl-[3px]">过滤器</label>
                    <select id="filter" class="h-full flex-1 appearance-none border border-[#adadad] bg-white px-0.5"><option>*.cls; *.tp; *.aptsource; *.ncl.*; *.mcd</option></select>
                    <svg class="pointer-events-none absolute right-2 size-2.5 text-[#555]"><use href="#chevThin"/></svg>
                </div>
            </div>
            <!-- Shortcuts and actions -->
            <div class="flex w-[136px] shrink-0 flex-col pb-[5px] pl-1 pr-[3px]">
                <div class="flex h-[37px] items-center">
                    <label for="shortcut">捷径</label>
                    <button class="ml-1.5" aria-label="上一级"><svg class="size-6"><use href="#upFolder"/></svg></button>
                    <button class="ml-2.5" aria-label="新建文件夹"><svg class="size-6"><use href="#newFolder"/></svg></button>
                    <button class="ml-3" aria-label="添加收藏"><svg class="size-6"><use href="#starAdd"/></svg></button>
                </div>
                <div class="relative flex items-center">
                    <select id="shortcut" class="h-6 w-full appearance-none border border-[#adadad] bg-white px-0.5"><option>无</option></select>
                    <span class="pointer-events-none absolute inset-y-px right-px grid w-[18px] place-items-center bg-[#e6e6e6]"><svg class="size-2.5 text-[#555]"><use href="#chevThin"/></svg></span>
                </div>
                <div class="mt-auto flex flex-col gap-1.5 pl-0.5 pr-0.5">
                    <button class="h-[21px] border border-[#adadad] bg-[#e1e1e1]">确定</button>
                    <button class="h-[21px] border border-[#adadad] bg-[#e1e1e1]">取消</button>
                </div>
            </div>
        </div>
    </div>

    <!-- Pointer -->
    <svg class="pointer-events-none absolute left-[385px] top-[841px] h-[19px] w-3" viewBox="0 0 12 19"><path d="M.7 1v14.500l3.300-3 2.300 5.500 2.400-1L6.400 11.700H11z" fill="#fff" stroke="#222"/></svg>

    <script>
        const f = (label, kids) => ({ icon: 'folder', label, kids, box: kids ? '-' : '+' });
        const n = (icon, label, kids) => ({ icon, label, kids, box: kids ? '-' : '+' });

        const folders = [
            f('课程指南'), f('课程整理'), f('鹏飞运动仿真与图片'),
            n('cloud', 'OneDrive'), n('drive', 'KX-2 (Z:)'), n('library', '库'),
            n('pc', '此电脑', [
                n('driveC', '本地磁盘 (C:)', [
                    f('AMD'), f('AppData'), f('CIMCO'), f('DRMsoft'), f('Fraps'), f('java9.0'),
                    f('KuGou'), f('MSI'), f('PerfLogs'), f('Program Files'), f('Program Files (x86)'), f('Siemens'),
                    f('用户', [f('__SUNLOGIN_USER__'), f('公用'), f('zcwudi520')]),
                    f('VERICUT8.1'), f('Windows'), f('zuoye'),
                ]),
                n('cube', '3D 对象'), n('desktop', '桌面'), n('doc', '文档'), n('down', '下载'),
                n('note', '音乐'), n('pic', '图片'), n('film', '视频'),
                n('drive', '软件 (D:)'), n('drive', '图档素材 (E:)'), n('drive', '其他 (F:)'), n('drive', '安装包 (G:)'),
                Object.assign(n('drive', '正式课 (H:)', [
                    f('AAA'), n('folderUp', 'UG安装视屏'), f('UG设计师的成长之路'), f('★邢帅教育-UG张超战队'),
                    n('course', '正式课'), f('精品公开课与课程大纲总会介绍详情'), f('腾讯课堂添加视频'),
                    f('邢帅教育-UG和CAD科目（毛骏战队）'),
                ]), { cls: 'bg-[#0a78d7] text-white outline outline-dotted outline-[#222]' }),
                n('drive', '资料 (I:)'), n('driveCd', 'CD 驱动器 (J:)'), n('drive', 'KX-2 (Z:)'),
            ]),
            n('net', '网络'),
        ];

        const bold = 'text-[13px] font-bold';
        const purple = 'text-[13px] font-bold italic text-[#8a1fc4]';
        // p: project node (icon, label, value, children)
        const p = (icon, label, value, kids, cls = bold) => ({ icon, label, value, kids, cls, box: kids ? '-' : '' });

        const project = [
            Object.assign(p('save', '项目', ': 3_axis_vmill_primitives', [
                p('setup', '工位', ': 1', [
                    p('machine2', '数控机床', '', [
                        p('control', '控制', ': fan15m'),
                        p('machine', '机床', ': 3_axis_tool_chain', [
                            p('attach', 'Rotary Attach', '', [
                                p('fixture', 'Fixture (0, 0, 0)', '', [
                                    p('', '模型', '', [
                                        p('model', '(3_axis_1)', '', null, 'font-bold'),
                                        p('model', '(3_axis_2)', '', null, 'font-bold'),
                                    ]),
                                    p('stock', 'Stock (0, 0, 0)', '', [
                                        p('', '模型', '', [p('grayBox', '', ''), p('blueBox', '', '')]),
                                        p('design', 'Design', '', [
                                            p('', '模型', '', [p('', '&nbsp;', '')]),
                                        ], 'font-bold'),
                                    ], 'font-bold'),
                                ], 'font-bold'),
                            ], 'font-bold'),
                            p('attach', 'Table Attach', '', null, 'font-bold'),
                            p('collide', '碰撞', '', null, purple),
                            p('travel', '行程极限', '', null, purple),
                        ]),
                    ]),
                    p('csys', '坐标系统', '', [p('csysGray', 'Program_Zero', '', null, 'font-bold')]),
                    p('gcode', 'G-代码偏置', '', [
                        p('', '1:工作偏置 - 54 - Spindle', '', null, 'font-bold text-[#1b1bc0]'),
                    ]),
                    Object.assign(p('tools', '加工刀具', ': 456'), { box: '+' }),
                    p('', '数控程序', '', null, 'bg-[#c2ecfb] text-[13px] font-bold italic text-[#8a1fc4]'),
                    p('', '数控子程序', '', null, purple),
                    p('ip', '保存过程文件', '', null, purple),
                ]),
            ], ''), { valueCls: 'text-[#1b1bc0]' }),
        ];

        function boxHtml(sign) {
            if (!sign) return '<span class="w-1"></span><span class="w-[5px] border-t border-dotted border-[#777]"></span>';
            return `<span class="relative grid size-[9px] shrink-0 place-items-center border border-[#8b8b8b] bg-white">
                <i class="absolute h-px w-[5px] bg-[#333]"></i>${sign === '+' ? '<i class="absolute h-[5px] w-px bg-[#333]"></i>' : ''}</span>`;
        }

        function treeHtml(nodes, rowCls, lastCls) {
            return nodes.map(node => `
                <li class="relative before:absolute before:left-1 before:top-0 before:border-l before:border-dotted before:border-[#777] before:content-[''] before:h-full ${lastCls}">
                    <div class="flex items-center ${rowCls}">
                        ${boxHtml(node.box)}
                        <span class="w-1.5 shrink-0 border-t border-dotted border-[#777]"></span>
                        ${node.icon ? `<svg class="mr-1 size-4 shrink-0 text-[#333]"><use href="#${node.icon}"/></svg>` : ''}
                        <span class="${node.cls || ''}">${node.label}</span>
                        ${node.value ? `<span class="ml-1 ${node.valueCls || 'font-bold text-[#1b1bc0]'}">${node.value}</span>` : ''}
                    </div>
                    ${node.kids ? `<ul class="pl-[19px]">${treeHtml(node.kids, rowCls, lastCls)}</ul>` : ''}
                </li>`).join('');
        }

        document.getElementById('folderTree').innerHTML = treeHtml(folders, 'h-4 leading-4', 'last:before:h-2');
        document.getElementById('projectTree').innerHTML = treeHtml(project, 'h-[18px] leading-[18px]', 'last:before:h-[9px]');
    </script>
</body>
</html>
